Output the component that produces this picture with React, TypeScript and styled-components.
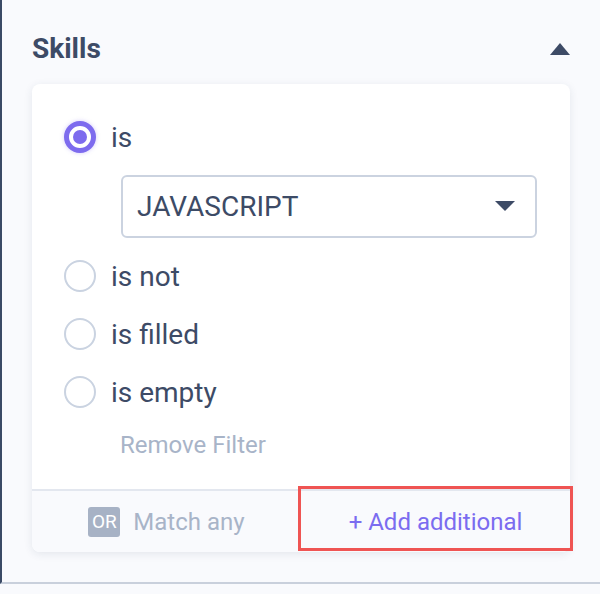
import React, { useState } from "react";
import styled, { createGlobalStyle } from "styled-components";

const GlobalStyle = createGlobalStyle`
  body {
    margin: 0;
    background: #f9fafd;
    font-family: Roboto, "Liberation Sans", sans-serif;
  }
`;

const Panel = styled.div`
  box-sizing: border-box;
  width: 600px;
  height: 584px;
  border-left: 2px solid #3b4a66;
  border-bottom: 2px solid #c9d0dc;
  padding: 32px 30px 0 30px;
  background: #f9fafd;
`;

const Header = styled.div`
  display: flex;
  align-items: center;
  justify-content: space-between;
  height: 33px;
  margin-bottom: 19px;
`;

const Title = styled.h2`
  margin: 0;
  font-size: 28px;
  font-weight: 700;
  line-height: 33px;
  color: #3d4b66;
`;

const Card = styled.div`
  background: #fff;
  border-radius: 8px;
  box-shadow: 0 2px 8px rgba(40, 55, 90, 0.1);
  height: 468px;
  display: flex;
  flex-direction: column;
`;

const Body = styled.div`
  flex: 1;
  padding: 24px 33px 0 32px;
`;

const OptionRow = styled.label<{ spaced?: boolean }>`
  display: flex;
  align-items: center;
  gap: 15px;
  height: 58px;
  margin-top: ${({ spaced }) => (spaced ? "9px" : "0")};
  font-size: 28px;
  color: #3d4b66;
  cursor: pointer;
`;

const Radio = styled.span<{ checked: boolean }>`
  box-sizing: border-box;
  display: flex;
  align-items: center;
  justify-content: center;
  width: 32px;
  height: 32px;
  border-radius: 50%;
  border: ${({ checked }) => (checked ? "5px solid #7d6bee" : "2px solid #cad3e1")};
  box-shadow: ${({ checked }) => (checked ? "0 0 4px rgba(125, 107, 238, 0.35)" : "none")};
  background: #fff;
  &::after {
    content: "";
    display: ${({ checked }) => (checked ? "block" : "none")};
    width: 14px;
    height: 14px;
    border-radius: 50%;
    background: #7d6bee;
  }
`;

const Select = styled.div`
  box-sizing: border-box;
  display: flex;
  align-items: center;
  justify-content: space-between;
  height: 63px;
  margin: 9px 0 0 57px;
  padding: 0 20px 0 14px;
  border: 2px solid #cbd3e0;
  border-radius: 6px;
  font-size: 28px;
  color: #3d4b66;
`;

const RemoveLink = styled.div`
  margin: 8px 0 0 56px;
  line-height: 32px;
  font-size: 24px;
  color: #a8b4c8;
`;

const Footer = styled.div`
  display: flex;
  height: 63px;
  box-sizing: border-box;
  border-top: 2px solid #e3e7ef;
  background: #f9fafd;
  border-radius: 0 0 8px 8px;
`;

const FooterButton = styled.div<{ highlighted?: boolean }>`
  position: relative;
  flex: 1;
  display: flex;
  align-items: center;
  justify-content: center;
  gap: 13px;
  font-size: 24px;
  color: ${({ highlighted }) => (highlighted ? "#7b6cf0" : "#a8b4c8")};
  &::after {
    content: "";
    display: ${({ highlighted }) => (highlighted ? "block" : "none")};
    position: absolute;
    top: -5px;
    left: -3px;
    right: -3px;
    bottom: 1px;
    border: 3px solid #ef5453;
  }
`;

const OrBadge = styled.span`
  display: inline-flex;
  align-items: center;
  justify-content: center;
  width: 32px;
  height: 30px;
  border-radius: 3px;
  background: #a7b2c5;
  color: #fff;
  font-size: 19px;
`;

const Caret = ({ up }: { up?: boolean }) => (
  <svg width="20" height="12" viewBox="0 0 20 12">
    <polygon points={up ? "0,12 10,0 20,12" : "0,0 20,0 10,10"} fill="#3d4b66" />
  </svg>
);

const options = ["is", "is not", "is filled", "is empty"];

export default function App() {
  const [value, setValue] = useState("is");
  return (
    <>
      <GlobalStyle />
      <Panel>
        <Header>
          <Title>Skills</Title>
          <Caret up />
        </Header>
        <Card>
          <Body>
            {options.map((opt, i) => (
              <React.Fragment key={opt}>
                <OptionRow spaced={i === 1} onClick={() => setValue(opt)}>
                  <Radio checked={value === opt} />
                  {opt}
                </OptionRow>
                {i === 0 && value === "is" && (
                  <Select>
                    JAVASCRIPT
                    <Caret />
                  </Select>
                )}
              </React.Fragment>
            ))}
            <RemoveLink>Remove Filter</RemoveLink>
          </Body>
          <Footer>
            <FooterButton>
              <OrBadge>OR</OrBadge>
              Match any
            </FooterButton>
            <FooterButton highlighted>+ Add additional</FooterButton>
          </Footer>
        </Card>
      </Panel>
    </>
  );
}
